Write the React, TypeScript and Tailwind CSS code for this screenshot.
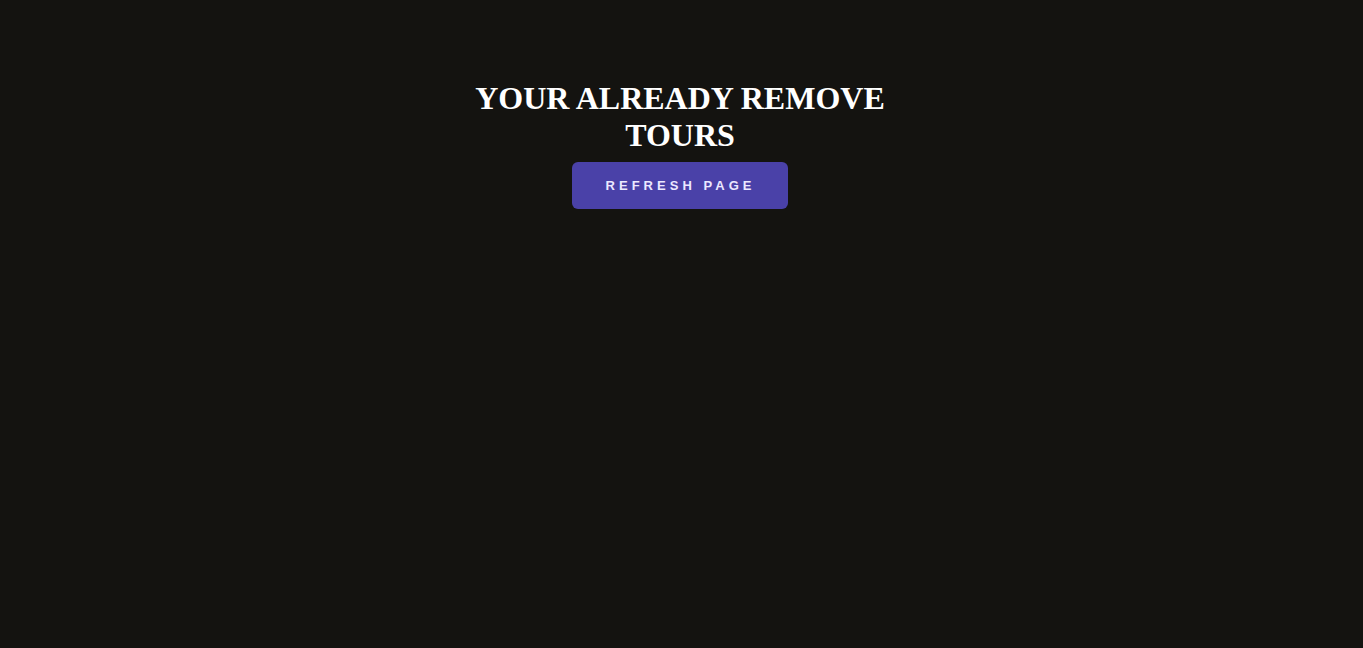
export default function App() {
  return (
    <main className="min-h-screen w-full bg-[#141310] flex flex-col items-center pt-[80px] pr-[3px]">
      <section className="flex flex-col items-center">
        <h1 className="w-[430px] text-center text-white font-bold text-[32px] leading-[37px] font-['Liberation_Serif','Times_New_Roman',serif]">
          YOUR ALREADY REMOVE TOURS
        </h1>
        <button className="mt-[8px] w-[216px] h-[47px] rounded-md bg-[#4a41a8] text-[#ece8ff] text-[13px] font-bold tracking-[0.31em] font-['Liberation_Sans',Arial,sans-serif] flex items-center justify-center pl-[1px]">
          REFRESH PAGE
        </button>
      </section>
    </main>
  )
}
